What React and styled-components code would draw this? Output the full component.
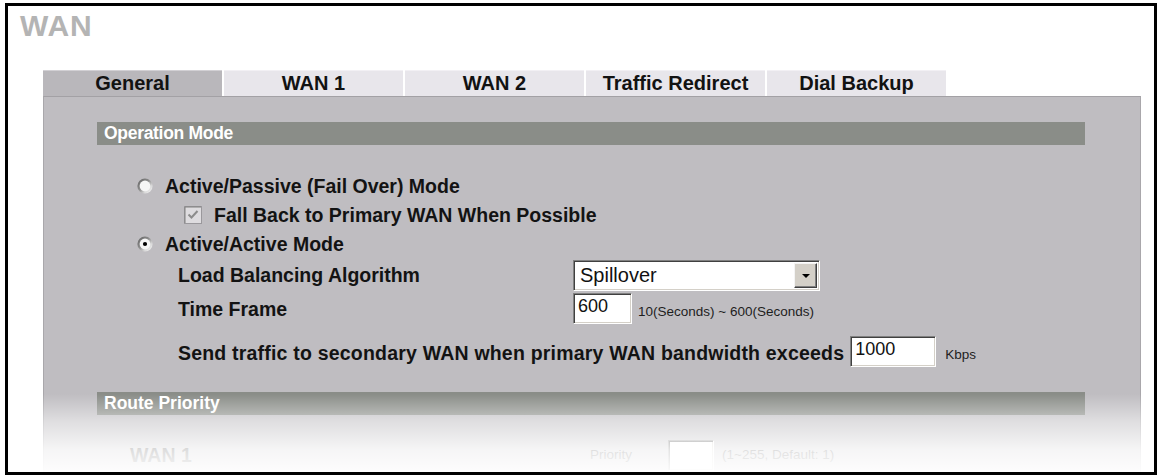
import React from 'react';
import styled, { createGlobalStyle } from 'styled-components';

const Global = createGlobalStyle`
  html, body { margin: 0; padding: 0; background: #fff; }
  body { font-family: "Liberation Sans", Arial, sans-serif; }
`;

const Frame = styled.div`
  box-sizing: border-box;
  width: 1152px;
  height: 472px;
  margin: 3px 0 0 5px;
  border: 3px solid #000;
  background: #fff;
  overflow: hidden;
  display: flex;
  flex-direction: column;
`;

const Title = styled.h1`
  margin: 3px 0 0 12px;
  font: bold 30px/34px "Liberation Sans", Arial, sans-serif;
  letter-spacing: 0.8px;
  color: #b4b4b4;
`;

const Tabs = styled.div`
  display: grid;
  grid-template-columns: repeat(5, 179px);
  column-gap: 2px;
  margin: 27px 0 0 35px;
`;

const Tab = styled.div`
  height: 26px;
  box-sizing: border-box;
  border-top: 1px solid ${(p) => (p.$active ? '#d2d0d4' : '#f2f0f4')};
  background: ${(p) => (p.$active ? '#b9b7bb' : '#e8e6eb')};
  font: bold 20px/25px "Liberation Sans", Arial, sans-serif;
  color: #121212;
  text-align: center;
`;

const Panel = styled.div`
  position: relative;
  box-sizing: border-box;
  width: 1098px;
  margin-left: 35px;
  flex: 1;
  background: #bfbdc1;
  border-top: 1px solid #a3a1a5;
  border-left: 1px solid #a9a7ab;
  border-right: 1px solid #a9a7ab;
  display: flex;
  flex-direction: column;
`;

const SectionBar = styled.div`
  height: 23px;
  margin: ${(p) => p.$top}px 55px 0 53px;
  padding-left: 7px;
  background: #8a8d88;
  color: #fff;
  font: bold 17.5px/23px "Liberation Sans", Arial, sans-serif;
  letter-spacing: ${(p) => p.$ls || 0}px;
`;

const Row = styled.div`
  display: flex;
  align-items: center;
  height: ${(p) => p.$h}px;
  margin-top: ${(p) => p.$mt || 0}px;
  padding-left: ${(p) => p.$indent}px;
  gap: ${(p) => p.$gap || 0}px;
`;

const Options = styled.div`
  display: flex;
  flex-direction: column;
  padding-top: 26px;
`;

const Label = styled.span`
  font: bold 19.5px/24px "Liberation Sans", Arial, sans-serif;
  color: #131313;
  white-space: nowrap;
  letter-spacing: ${(p) => p.$ls || 0}px;
  width: ${(p) => (p.$w ? `${p.$w}px` : 'auto')};
  margin-top: ${(p) => p.$mt || 0}px;
  flex: none;
`;

const Hint = styled.span`
  font: 13.5px/16px "Liberation Sans", Arial, sans-serif;
  color: #1e1e1e;
  white-space: nowrap;
  margin-top: ${(p) => p.$mt || 0}px;
  margin-left: ${(p) => p.$ml || 0}px;
  width: ${(p) => (p.$w ? `${p.$w}px` : 'auto')};
`;

const inset = `
  box-sizing: border-box;
  border: 1px solid;
  border-color: #808080 #fff #fff #808080;
  box-shadow: inset 1px 1px #404040, inset -1px -1px #d4d0c8;
  background: #fff;
`;

const SelectBox = styled.div`
  ${inset}
  width: 247px;
  height: 31px;
  display: flex;
  align-items: center;
  padding: 0 2px 0 6px;
  font: 20px/24px "Liberation Sans", Arial, sans-serif;
  color: #111;
`;

const DropButton = styled.span`
  box-sizing: border-box;
  margin-left: auto;
  width: 23px;
  height: 25px;
  background: #d4d0c8;
  border: 1px solid;
  border-color: #f4f4f4 #404040 #404040 #f4f4f4;
  box-shadow: inset -1px -1px #808080;
  display: flex;
  align-items: center;
  justify-content: center;
  &::after {
    content: '';
    border-left: 4px solid transparent;
    border-right: 4px solid transparent;
    border-top: 4px solid #000;
    margin-top: 1px;
  }
`;

const TextBox = styled.input`
  ${inset}
  width: ${(p) => p.$w}px;
  height: 31px;
  padding: 0 0 4px 4px;
  font: 18px "Liberation Sans", Arial, sans-serif;
  color: #111;
  outline: none;
  flex: none;
`;

const Fade = styled.div`
  position: absolute;
  left: -1px;
  right: -1px;
  bottom: 0;
  height: 78px;
  pointer-events: none;
  background: linear-gradient(
    to bottom,
    rgba(255, 255, 255, 0) 0%,
    rgba(255, 255, 255, 0.5) 35%,
    rgba(255, 255, 255, 0.86) 72%,
    rgba(255, 255, 255, 0.97) 100%
  );
`;

const Radio = ({ checked }) => {
  const id = checked ? 'rg1' : 'rg0';
  return (
    <svg width="16" height="16" viewBox="0 0 16 16" style={{ flex: 'none' }}>
      <defs>
        <linearGradient id={id} x1="0" y1="0" x2="1" y2="1">
          <stop offset="0" stopColor="#5e5e5e" />
          <stop offset="0.45" stopColor="#8e8e8e" />
          <stop offset="0.7" stopColor="#d8d8d8" />
          <stop offset="1" stopColor="#fbfbfb" />
        </linearGradient>
      </defs>
      <circle cx="8" cy="8" r="7.6" fill={`url(#${id})`} />
      <circle cx="8" cy="8" r="5.4" fill="#f6f6f6" />
      {checked && <circle cx="8" cy="8" r="2.1" fill="#000" />}
    </svg>
  );
};

const Check = () => (
  <svg width="18" height="18" viewBox="0 0 18 18" style={{ flex: 'none' }}>
    <rect x="0.5" y="0.5" width="17" height="17" fill="#dedcdf" stroke="#9a989c" />
    <path d="M1 17V1h16" fill="none" stroke="#808080" />
    <path d="M4.5 8.5l3 3 6-6.5" fill="none" stroke="#8c8c8c" strokeWidth="2" />
  </svg>
);

const tabs = ['General', 'WAN 1', 'WAN 2', 'Traffic Redirect', 'Dial Backup'];

export default function App() {
  return (
    <>
      <Global />
      <Frame>
        <Title>WAN</Title>
        <Tabs>
          {tabs.map((t, i) => (
            <Tab key={t} $active={i === 0}>
              {t}
            </Tab>
          ))}
        </Tabs>
        <Panel>
          <SectionBar $top={25} $ls={-0.3}>Operation Mode</SectionBar>
          <Options>
            <Row $h={30} $indent={93} $gap={12}>
              <Radio />
              <Label>Active/Passive (Fail Over) Mode</Label>
            </Row>
            <Row $h={28} $indent={140} $gap={12}>
              <Check />
              <Label>Fall Back to Primary WAN When Possible</Label>
            </Row>
            <Row $h={30} $indent={93} $gap={12}>
              <Radio checked />
              <Label>Active/Active Mode</Label>
            </Row>
            <Row $h={32} $indent={134}>
              <Label $w={395}>Load Balancing Algorithm</Label>
              <SelectBox>
                Spillover
                <DropButton />
              </SelectBox>
            </Row>
            <Row $h={33} $mt={1} $indent={134}>
              <Label $w={395}>Time Frame</Label>
              <TextBox $w={59} readOnly defaultValue="600" />
              <Hint $mt={6} $ml={6}>10(Seconds) ~ 600(Seconds)</Hint>
            </Row>
            <Row $h={32} $mt={10} $indent={134} $gap={6}>
              <Label $ls={0.2} $mt={4}>Send traffic to secondary WAN when primary WAN bandwidth exceeds</Label>
              <TextBox $w={86} readOnly defaultValue="1000" />
              <Hint $mt={8} $ml={3}>Kbps</Hint>
            </Row>
          </Options>
          <SectionBar $top={25}>Route Priority</SectionBar>
          <Row $h={32} $mt={24} $indent={86}>
            <Label $w={460}>WAN 1</Label>
            <Hint $w={78}>Priority</Hint>
            <TextBox $w={46} readOnly defaultValue="" />
            <Hint $ml={8}>(1~255, Default: 1)</Hint>
          </Row>
          <Fade />
        </Panel>
      </Frame>
    </>
  );
}
